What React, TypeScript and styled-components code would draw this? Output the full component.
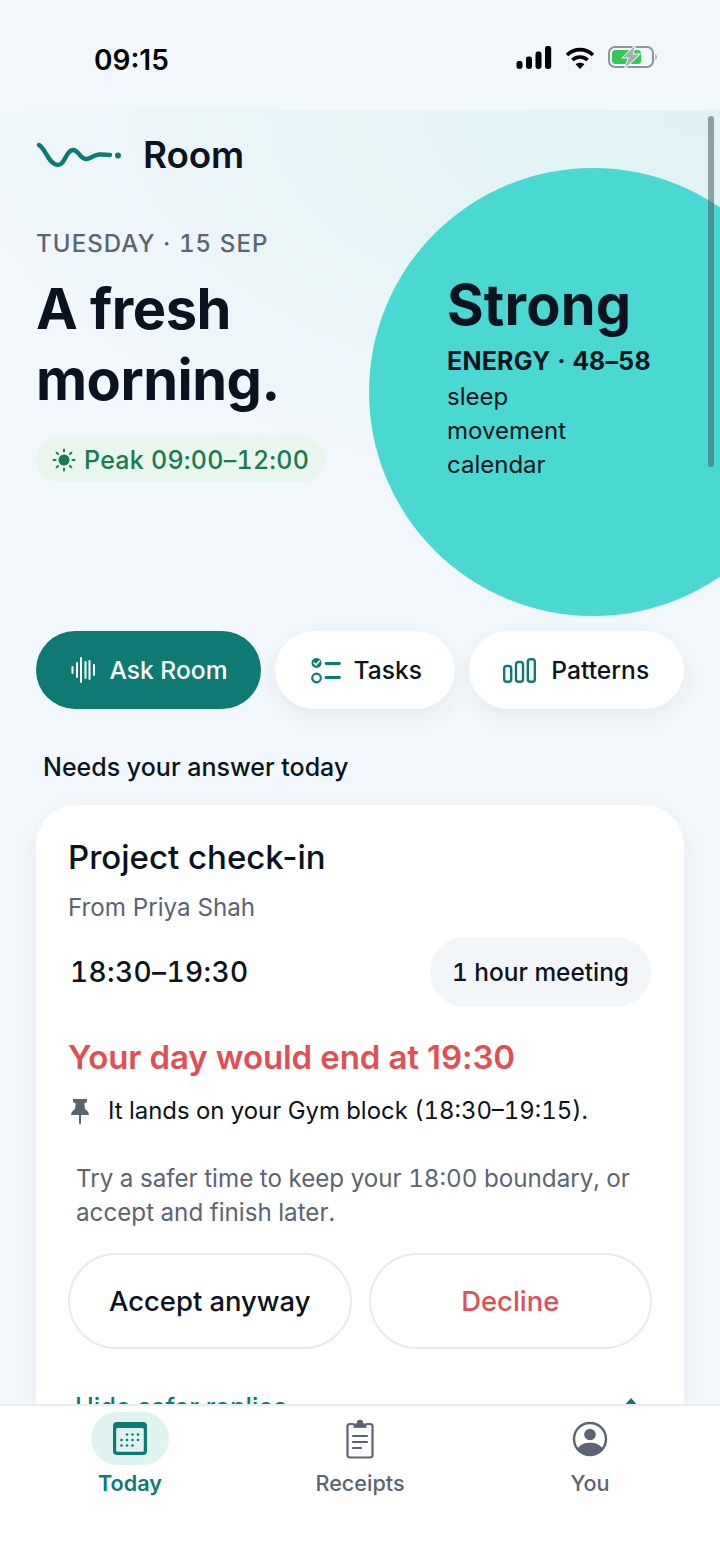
import React from "react";
import styled, { createGlobalStyle } from "styled-components";

const Global = createGlobalStyle`
  html, body { margin: 0; padding: 0; height: 1565px; overflow: hidden; background: #f2f7fb; }
  * { box-sizing: border-box; }
  body { font-family: Inter, "Noto Sans", sans-serif; color: #0b1320; }
`;

const Page = styled.div`
  width: 720px; height: 1565px; display: flex; flex-direction: column; overflow: hidden; background: #f2f7fb;
`;
const StatusBar = styled.div`
  height: 110px; flex: none; display: flex; justify-content: space-between; align-items: flex-start;
  padding: 43px 62px 0 94px;
`;
const Clock = styled.div`
  font-size: 28px; line-height: 34px; font-weight: 600; color: #000; letter-spacing: 0;
`;
const StatusIcons = styled.div`
  display: flex; gap: 13px; align-items: center; height: 30px; margin-top: -1px;
`;
const Scroller = styled.div`
  flex: 1; position: relative; overflow: hidden; min-height: 0;
  background:
    radial-gradient(820px 420px at 100% 0%, #e0f2f4 0%, rgba(224,242,244,0.55) 52%, rgba(242,247,251,0) 100%);
`;
const Scrollbar = styled.div`
  position: absolute; top: 6px; right: 6px; width: 6px; height: 351px; border-radius: 3px;
  background: rgba(70,90,100,0.55); z-index: 3;
`;
const Hero = styled.section`
  height: 521px; padding: 25px 36px 0; position: relative;
`;
const Brand = styled.div`
  display: flex; align-items: center; gap: 20px; height: 40px;
`;
const BrandName = styled.div`
  font-size: 36.8px; line-height: 40px; font-weight: 600; letter-spacing: -0.1px; color: #0b1320;
`;
const DateLine = styled.div`
  margin-top: 54px; font-size: 24px; line-height: 30px; font-weight: 500; letter-spacing: 1.1px; color: #5b6472;
  font-variant-numeric: tabular-nums;
`;
const Headline = styled.h1`
  margin: 15px 0 0; font-size: 56px; line-height: 71px; font-weight: 700; letter-spacing: -0.5px; color: #0b1320;
`;
const PeakPill = styled.div`
  display: inline-flex; align-items: center; gap: 8px; height: 45px; margin-top: 21px; padding: 0 16px;
  border-radius: 23px; background: #e8f6ee; color: #1b7a52; font-size: 25px; font-weight: 500; letter-spacing: 0.25px;
  font-variant-numeric: tabular-nums;
`;
const Circle = styled.div`
  position: absolute; left: 369px; top: 58px; width: 448px; height: 448px; border-radius: 50%;
  background: #4ad8d2; padding: 102px 0 0 78px; color: #0b1320;
`;
const Score = styled.div`
  font-size: 56px; line-height: 70px; font-weight: 700; letter-spacing: 0.2px;
`;
const Energy = styled.div`
  margin-top: 4px; margin-bottom: 2px; font-size: 25px; line-height: 34px; font-weight: 700; letter-spacing: 0.2px;
  font-variant-numeric: tabular-nums;
`;
const Factor = styled.div`
  font-size: 24px; line-height: 34px; font-weight: 400;
`;
const Actions = styled.div`
  display: flex; gap: 14px; padding: 0 36px;
`;
const ActionBtn = styled.div<{ $primary?: boolean; $w: number; $gap: number; $pad: number }>`
  width: ${p => p.$w}px; height: 78px; border-radius: 39px; display: flex; align-items: center; justify-content: center;
  gap: ${p => p.$gap}px; padding-left: ${p => p.$pad}px; font-size: 24.6px; font-weight: 500;
  background: ${p => (p.$primary ? "#0f7a74" : "#fff")};
  color: ${p => (p.$primary ? "#fff" : "#0b1320")};
  box-shadow: ${p => (p.$primary ? "none" : "0 8px 22px rgba(30,50,70,0.06)")};
`;
const SectionTitle = styled.h2`
  margin: 42px 0 0 43px; font-size: 25px; line-height: 32px; font-weight: 500; color: #0b1320;
`;
const Card = styled.section`
  margin: 22px 36px 0; padding: 31px 32px 0; background: #fff; border-radius: 40px;
  box-shadow: 0 8px 26px rgba(30,50,70,0.05); height: 700px;
`;
const CardTitle = styled.h3`
  margin: 0; font-size: 33px; line-height: 42px; font-weight: 500; color: #0b1320;
`;
const From = styled.div`
  margin-top: 15px; font-size: 24.2px; line-height: 30px; color: #5b6472;
`;
const TimeRow = styled.div`
  margin-top: 14px; display: flex; justify-content: space-between; align-items: center;
`;
const TimeText = styled.div`
  font-size: 28px; font-weight: 500; letter-spacing: 0.4px; padding-left: 2px; font-variant-numeric: tabular-nums;
`;
const Chip = styled.div`
  width: 221px; height: 70px; border-radius: 35px; background: #f3f6f9; margin-right: 1px;
  display: flex; align-items: center; justify-content: center; font-size: 24.4px; font-weight: 500;
  font-variant-numeric: tabular-nums;
`;
const Warning = styled.div`
  margin-top: 29px; font-size: 33px; line-height: 42px; font-weight: 600; color: #e04f55; letter-spacing: -0.1px;
`;
const PinRow = styled.div`
  margin-top: 16px; display: flex; align-items: center; gap: 18px; font-size: 23.9px; line-height: 34px; padding-left: 2px;
  font-variant-numeric: tabular-nums;
`;
const Advice = styled.p`
  margin: 34px 0 0 8px; font-size: 24.2px; line-height: 34px; color: #5b6472; width: 570px;
  font-variant-numeric: tabular-nums;
`;
const ReplyRow = styled.div`
  margin-top: 23px; display: flex; gap: 17px;
`;
const ReplyBtn = styled.div<{ $danger?: boolean }>`
  width: 284px; height: 96px; border-radius: 48px; border: 2px solid #e7ebef; background: #fff;
  display: flex; align-items: center; justify-content: center; font-size: 27.4px; font-weight: 500;
  color: ${p => (p.$danger ? "#e04f55" : "#0b1320")};
`;
const ToggleRow = styled.div`
  margin-top: 42px; padding: 0 13px 0 7px; display: flex; justify-content: space-between; align-items: center;
  color: #0f7a74; font-size: 25.3px; line-height: 32px; font-weight: 500;
`;
const Chevron = styled.svg`
  margin-top: -9px;
`;
const Nav = styled.nav`
  height: 161px; flex: none; background: #fff; border-top: 2px solid #e9edf0; display: grid;
  grid-template-columns: repeat(3, 230px); padding: 6px 15px 0; position: relative; z-index: 4;
`;
const NavItem = styled.div<{ $active?: boolean }>`
  display: flex; flex-direction: column; align-items: center;
  color: ${p => (p.$active ? "#0f7a74" : "#5b6472")};
  font-size: 21.6px; font-weight: ${p => (p.$active ? 600 : 500)};
`;
const NavIcon = styled.div<{ $active?: boolean }>`
  width: 78px; height: 53px; border-radius: 27px; display: flex; align-items: center; justify-content: center;
  background: ${p => (p.$active ? "#dff4f0" : "transparent")};
`;
const NavLabel = styled.div`
  margin-top: 4px; line-height: 28px;
`;

const Signal = () => (
  <svg width="36" height="23" viewBox="0 0 36 23" fill="#000">
    <rect x="0.5" y="15" width="6" height="8" rx="2.4" />
    <rect x="10" y="10.5" width="6" height="12.5" rx="2.4" />
    <rect x="19.5" y="5.5" width="6" height="17.5" rx="2.4" />
    <rect x="29" y="0" width="6.2" height="23" rx="2.4" />
  </svg>
);
const Wifi = () => (
  <svg width="30" height="23" viewBox="0 0 30 23" fill="none" stroke="#000" strokeWidth="3.6">
    <path d="M2 9 C9.5 1.8 20.5 1.8 28 9" />
    <path d="M7.4 14 C11.6 10 18.4 10 22.6 14" />
    <path d="M15 23 L10.6 18.2 C13 16.2 17 16.2 19.4 18.2 Z" fill="#000" stroke="none" />
  </svg>
);
const Battery = () => (
  <svg width="50" height="24" viewBox="0 0 50 24">
    <rect x="1" y="2" width="44" height="20" rx="6" fill="none" stroke="#8f9599" strokeWidth="2" />
    <rect x="4" y="5" width="29" height="14" rx="3.5" fill="#35c759" />
    <path d="M27 1 L15 12.500 L21 12.500 L17 23 L31 9.500 L24.500 9.500 Z" fill="#a9adb0" stroke="#f2f7fb" strokeWidth="1.800" paintOrder="stroke" />
    <path d="M47.500 8.500 Q50 12 47.500 15.500 Z" fill="#8f9599" />
  </svg>
);
const Logo = () => (
  <svg width="87" height="26" viewBox="36 142 87 26" fill="none">
    <path d="M39 145 C46 149 49 165 58 165 C65 165 66 150 73 150 C79 150 80 160 87 159 C91 158.500 93 155 99 154.500 C103 154.300 106 154.800 110 155"
      stroke="#0f7a74" strokeWidth="4.400" strokeLinecap="round" />
    <circle cx="118" cy="155.500" r="3" fill="#0f7a74" />
  </svg>
);
const Sun = () => (
  <svg width="24" height="24" viewBox="0 0 24 24" fill="none" stroke="#1b7a52" strokeWidth="2" strokeLinecap="round">
    <circle cx="12" cy="12" r="5.500" fill="#1b7a52" stroke="none" />
    <path d="M12 1.500V3.500M12 20.500V22.500M1.500 12H3.500M20.500 12H22.500M4.600 4.600L6 6M18 18L19.400 19.400M4.600 19.400L6 18M18 6L19.400 4.600" />
  </svg>
);
const Wave = () => (
  <svg width="26" height="28" viewBox="0 0 26 28" stroke="#fff" strokeWidth="2" strokeLinecap="round">
    <path d="M1.500 11V17M6 7V21M10 2V26M14.500 6V22M18.500 5V23M23 9V19" />
  </svg>
);
const TasksIcon = () => (
  <svg width="30" height="27" viewBox="0 0 30 27" fill="none">
    <circle cx="5.500" cy="6" r="5" fill="#0f7a74" />
    <path d="M3 6L5 8L8.200 4.200" stroke="#fff" strokeWidth="1.600" strokeLinecap="round" strokeLinejoin="round" />
    <circle cx="5.500" cy="21" r="4.300" stroke="#0f7a74" strokeWidth="2.200" />
    <path d="M15 6.500H28.500M15 20.500H28.500" stroke="#0f7a74" strokeWidth="2.800" strokeLinecap="round" />
  </svg>
);
const BarsIcon = () => (
  <svg width="33" height="25" viewBox="0 0 33 25" fill="none" stroke="#0f7a74" strokeWidth="2.400">
    <rect x="1.200" y="8" width="7" height="15.800" rx="2.600" />
    <rect x="13" y="4" width="7" height="19.800" rx="2.600" />
    <rect x="24.800" y="1.200" width="7" height="22.600" rx="2.600" />
  </svg>
);
const Pin = () => (
  <svg width="20" height="27" viewBox="0 0 20 27" fill="#5b6472">
    <path d="M3 1H17V4L14.300 5.500L15 11C17 12.500 19 14 19 17H1C1 14 3 12.500 5 11L5.700 5.500L3 4Z" />
    <rect x="9" y="16" width="2" height="10" rx="1" />
  </svg>
);
const Calendar = () => (
  <svg width="34" height="33" viewBox="0 0 34 33">
    <rect x="0" y="0" width="34" height="33" rx="4" fill="#0f7a74" />
    <rect x="3.200" y="6" width="27.600" height="23.800" rx="1.500" fill="#dff4f0" />
    <g fill="#0f7a74">
      {[[14, 12.500], [19.500, 12.500], [25, 12.500], [8.500, 18], [14, 18], [19.500, 18], [25, 18], [8.500, 23.500], [14, 23.500], [19.500, 23.500]].map(([x, y]) => (
        <circle key={`${x}-${y}`} cx={x} cy={y} r="1.300" />
      ))}
    </g>
  </svg>
);
const Clipboard = () => (
  <svg width="28" height="40" viewBox="0 0 28 40" fill="none" stroke="#5b6472" strokeWidth="2.200" strokeLinecap="round">
    <path d="M7 5H4Q1.500 5 1.500 7.500V36Q1.500 38.500 4 38.500H24Q26.500 38.500 26.500 36V7.500Q26.500 5 24 5H21" />
    <path d="M8 8V5H11Q11 1 14 1Q17 1 17 5H20V8Z" fill="#5b6472" strokeWidth="1" />
    <path d="M7 17H21M7 23H21M7 29H15" />
  </svg>
);
const Person = () => (
  <svg width="36" height="36" viewBox="0 0 36 36">
    <circle cx="18" cy="18" r="16" fill="none" stroke="#5b6472" strokeWidth="2.400" />
    <circle cx="18" cy="13.500" r="5.800" fill="#5b6472" />
    <path d="M5.500 27.500C8.500 23 13 21.800 18 21.800C23 21.800 27.500 23 30.500 27.500C27.500 32 23 34.500 18 34.500C13 34.500 8.500 32 5.500 27.500Z" fill="#5b6472" />
  </svg>
);

export default function App() {
  return (
    <Page>
      <Global />
      <StatusBar>
        <Clock>09:15</Clock>
        <StatusIcons>
          <Signal />
          <Wifi />
          <Battery />
        </StatusIcons>
      </StatusBar>
      <Scroller>
        <Scrollbar />
        <Hero>
          <Brand>
            <Logo />
            <BrandName>Room</BrandName>
          </Brand>
          <DateLine>TUESDAY · 15 SEP</DateLine>
          <Headline>A fresh<br />morning.</Headline>
          <PeakPill><Sun />Peak 09:00–12:00</PeakPill>
          <Circle>
            <Score>Strong</Score>
            <Energy>ENERGY · 48–58</Energy>
            <Factor>sleep</Factor>
            <Factor>movement</Factor>
            <Factor>calendar</Factor>
          </Circle>
        </Hero>
        <Actions>
          <ActionBtn $primary $w={225} $gap={12} $pad={2}><Wave />Ask Room</ActionBtn>
          <ActionBtn $w={179.5} $gap={13} $pad={3}><TasksIcon />Tasks</ActionBtn>
          <ActionBtn $w={215.5} $gap={15} $pad={0}><BarsIcon />Patterns</ActionBtn>
        </Actions>
        <SectionTitle>Needs your answer today</SectionTitle>
        <Card>
          <CardTitle>Project check-in</CardTitle>
          <From>From Priya Shah</From>
          <TimeRow>
            <TimeText>18:30–19:30</TimeText>
            <Chip>1 hour meeting</Chip>
          </TimeRow>
          <Warning>Your day would end at 19:30</Warning>
          <PinRow><Pin />It lands on your Gym block (18:30–19:15).</PinRow>
          <Advice>Try a safer time to keep your 18:00 boundary, or accept and finish later.</Advice>
          <ReplyRow>
            <ReplyBtn>Accept anyway</ReplyBtn>
            <ReplyBtn $danger>Decline</ReplyBtn>
          </ReplyRow>
          <ToggleRow>
            <span>Hide safer replies</span>
            <Chevron width="16" height="10" viewBox="0 0 16 10" fill="#0f7a74"><path d="M8 0L16 9H0Z" /></Chevron>
          </ToggleRow>
        </Card>
      </Scroller>
      <Nav>
        <NavItem $active>
          <NavIcon $active><Calendar /></NavIcon>
          <NavLabel>Today</NavLabel>
        </NavItem>
        <NavItem>
          <NavIcon><Clipboard /></NavIcon>
          <NavLabel>Receipts</NavLabel>
        </NavItem>
        <NavItem>
          <NavIcon><Person /></NavIcon>
          <NavLabel>You</NavLabel>
        </NavItem>
      </Nav>
    </Page>
  );
}
